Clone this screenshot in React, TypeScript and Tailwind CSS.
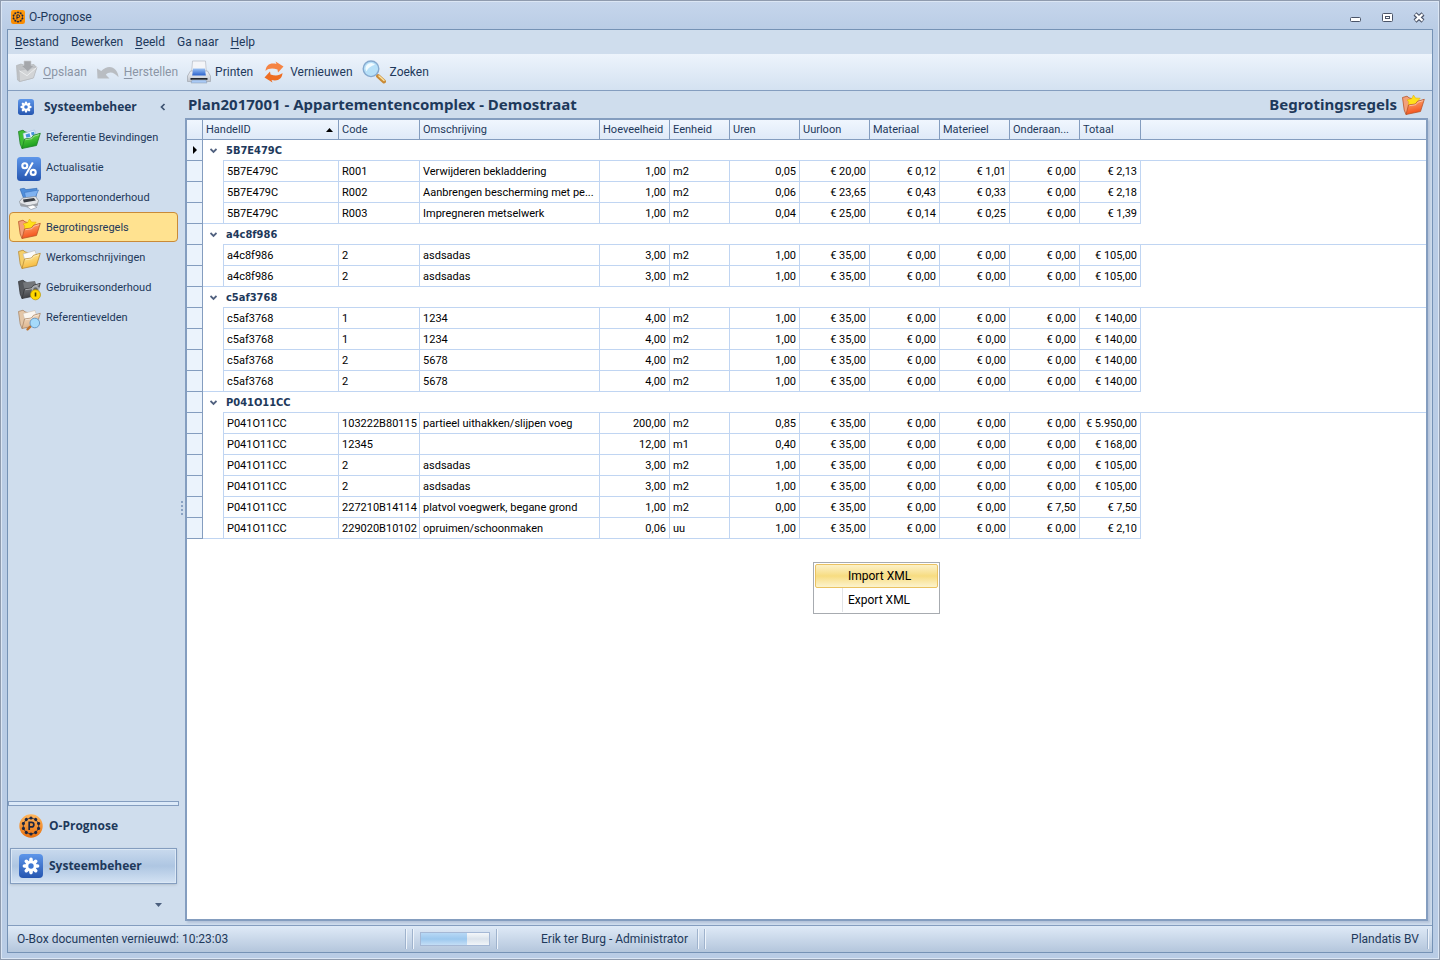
import type { ReactNode } from 'react';
import clsx from 'clsx';

interface Line {
  handelId: string;
  code: string;
  omschrijving: string;
  hoeveelheid: string;
  eenheid: string;
  uren: string;
  bedragen: string[]; // uurloon, materiaal, materieel, onderaanneming, totaal
}

const line = (
  handelId: string,
  code: string,
  omschrijving: string,
  hoeveelheid: string,
  eenheid: string,
  uren: string,
  ...bedragen: string[]
): Line => ({ handelId, code, omschrijving, hoeveelheid, eenheid, uren, bedragen });

const groups: { id: string; lines: Line[] }[] = [
  {
    id: '5B7E479C',
    lines: [
      line('5B7E479C', 'R001', 'Verwijderen bekladdering', '1,00', 'm2', '0,05', '20,00', '0,12', '1,01', '0,00', '2,13'),
      line('5B7E479C', 'R002', 'Aanbrengen bescherming met pe...', '1,00', 'm2', '0,06', '23,65', '0,43', '0,33', '0,00', '2,18'),
      line('5B7E479C', 'R003', 'Impregneren metselwerk', '1,00', 'm2', '0,04', '25,00', '0,14', '0,25', '0,00', '1,39'),
    ],
  },
  {
    id: 'a4c8f986',
    lines: [
      line('a4c8f986', '2', 'asdsadas', '3,00', 'm2', '1,00', '35,00', '0,00', '0,00', '0,00', '105,00'),
      line('a4c8f986', '2', 'asdsadas', '3,00', 'm2', '1,00', '35,00', '0,00', '0,00', '0,00', '105,00'),
    ],
  },
  {
    id: 'c5af3768',
    lines: [
      line('c5af3768', '1', '1234', '4,00', 'm2', '1,00', '35,00', '0,00', '0,00', '0,00', '140,00'),
      line('c5af3768', '1', '1234', '4,00', 'm2', '1,00', '35,00', '0,00', '0,00', '0,00', '140,00'),
      line('c5af3768', '2', '5678', '4,00', 'm2', '1,00', '35,00', '0,00', '0,00', '0,00', '140,00'),
      line('c5af3768', '2', '5678', '4,00', 'm2', '1,00', '35,00', '0,00', '0,00', '0,00', '140,00'),
    ],
  },
  {
    id: 'P041O11CC',
    lines: [
      line('P041O11CC', '103222B80115', 'partieel uithakken/slijpen voeg', '200,00', 'm2', '0,85', '35,00', '0,00', '0,00', '0,00', '5.950,00'),
      line('P041O11CC', '12345', '', '12,00', 'm1', '0,40', '35,00', '0,00', '0,00', '0,00', '168,00'),
      line('P041O11CC', '2', 'asdsadas', '3,00', 'm2', '1,00', '35,00', '0,00', '0,00', '0,00', '105,00'),
      line('P041O11CC', '2', 'asdsadas', '3,00', 'm2', '1,00', '35,00', '0,00', '0,00', '0,00', '105,00'),
      line('P041O11CC', '227210B14114', 'platvol voegwerk, begane grond', '1,00', 'm2', '0,00', '35,00', '0,00', '0,00', '7,50', '7,50'),
      line('P041O11CC', '229020B10102', 'opruimen/schoonmaken', '0,06', 'uu', '1,00', '35,00', '0,00', '0,00', '0,00', '2,10'),
    ],
  },
];

const columns = ['Code', 'Omschrijving', 'Hoeveelheid', 'Eenheid', 'Uren', 'Uurloon', 'Materiaal', 'Materieel', 'Onderaan...', 'Totaal'];

/* ---------- icons ---------- */

interface FolderProps {
  id: string;
  from: string;
  to: string;
  edge: string;
  back: string;
  behind?: ReactNode;
  children?: ReactNode;
}

function Folder({ id, from, to, edge, back, behind, children }: FolderProps) {
  return (
    <svg width="24" height="24" viewBox="0 0 24 24" aria-hidden="true">
      <defs>
        <linearGradient id={id} x1="0" y1="0" x2="0.3" y2="1">
          <stop offset="0" stopColor={from} />
          <stop offset="1" stopColor={to} />
        </linearGradient>
      </defs>
      <path d="M1.5 4.5 6 3.2l2 1.6 3 1 3 4-8.500 11.500-.5.2L3.200 17z" fill={back} stroke={edge} strokeWidth="0.8" strokeLinejoin="round" />
      {behind}
      <path d="M5 21.500 7.500 12l7-1 2-2.700 6.800-2-3.800 12.200z" fill={`url(#${id})`} stroke={edge} strokeWidth="0.8" strokeLinejoin="round" />
      <path d="M8.300 12.700l6.600-1 2-2.500 5.300-1.600" fill="none" stroke="#fff" strokeOpacity="0.6" strokeWidth="0.8" />
      {children}
    </svg>
  );
}

function OrangeFolder({ id }: { id: string }) {
  return (
    <Folder
      id={id}
      from="#ffb27a"
      to="#f4501a"
      edge="#b8562a"
      back="#f3a07a"
      behind={<path d="M12.500 2l2 3 4.700.2-2.600 3.300 1 2.700-6 1.300-4.300-.4.500-3.200L6 7l4.700-1.400z" fill="#ffe11a" stroke="#e0a800" strokeWidth="0.5" />}
    />
  );
}

function Gear({ id, size }: { id: string; size: 16 | 24 }) {
  return (
    <svg width={size} height={size} viewBox="0 0 24 24" aria-hidden="true">
      <defs>
        <linearGradient id={id} x1="0" y1="0" x2="0" y2="1">
          <stop offset="0" stopColor="#5d96ea" />
          <stop offset="1" stopColor="#2656b0" />
        </linearGradient>
      </defs>
      <rect width="24" height="24" rx="4" fill={`url(#${id})`} />
      <g stroke="#fff" strokeWidth="3.6" strokeLinecap="round">
        <path d="M12 5.4v13.2M5.4 12h13.2M7.3 7.3l9.4 9.4M16.7 7.3l-9.4 9.4" />
      </g>
      <circle cx="12" cy="12" r="5.6" fill="#fff" />
      <circle cx="12" cy="12" r="2.7" fill="#3f78d2" />
    </svg>
  );
}

const dots = [0, 36, 72, 108, 144, 180, 216, 252, 288, 324];

function AppBadge({ id, square }: { id: string; square?: boolean }) {
  return (
    <svg width={square ? 14 : 24} height={square ? 14 : 24} viewBox="0 0 24 24" aria-hidden="true">
      <defs>
        <linearGradient id={id} x1="0" y1="0" x2="0" y2="1">
          <stop offset="0" stopColor={square ? '#ff9c10' : '#ffb75e'} />
          <stop offset="1" stopColor={square ? '#f98a00' : '#e8700e'} />
        </linearGradient>
      </defs>
      {square ? <rect width="24" height="24" rx="4" fill={`url(#${id})`} /> : <circle cx="12" cy="12" r="11.7" fill={`url(#${id})`} />}
      <circle cx="12" cy="12" r="7.8" fill="none" stroke="#2a2f45" strokeWidth="0.8" />
      {dots.map((a) => (
        <circle key={a} cx="12" cy="4" r="1.6" fill="#1f2640" transform={`rotate(${a} 12 12)`} />
      ))}
      <path d="M10.2 16V8.4h2.4a2.2 2.2 0 0 1 0 4.5h-2.4" fill="none" stroke="#1f2640" strokeWidth="1.7" />
    </svg>
  );
}

function Percent() {
  return (
    <svg width="24" height="24" viewBox="0 0 24 24" aria-hidden="true">
      <defs>
        <linearGradient id="pct" x1="0" y1="0" x2="0" y2="1">
          <stop offset="0" stopColor="#5d96ea" />
          <stop offset="1" stopColor="#2656b0" />
        </linearGradient>
      </defs>
      <rect width="24" height="24" rx="3.5" fill="url(#pct)" />
      <g fill="none" stroke="#fff">
        <circle cx="7.8" cy="8.8" r="2.5" strokeWidth="2.1" />
        <circle cx="16.2" cy="15.4" r="2.5" strokeWidth="2.1" />
        <path d="M15.800 5.500 8.200 18.700" strokeWidth="2" />
      </g>
    </svg>
  );
}

function ReportPrinter() {
  return (
    <svg width="24" height="24" viewBox="0 0 24 24" aria-hidden="true">
      <path d="M3 2l4-.7 2 1.300 11-1.300-1 9-12 2z" fill="#4f8edb" stroke="#2c63ad" strokeWidth="0.6" />
      <path d="M7.500 5.500l14-2.500-3.500 8-9 1.500z" fill="#7fb2f0" stroke="#3c74bf" strokeWidth="0.6" />
      <path d="M2.500 14.500l3-3.500 13-1.500 3 4-1.500 4.500-16 1z" fill="#e4e6e9" stroke="#84888e" strokeWidth="0.7" />
      <path d="M6 12.500l11-1.500 1.800 2.500-12 2z" fill="#3a3e44" />
      <path d="M3.500 16l8 2.400 9.500-2.400v2.500l-8 2.500-9-2z" fill="#9da1a7" />
      <path d="M10 19.500l6-1.500 4 2.300-6 2.300z" fill="#fff" stroke="#8a8f96" strokeWidth="0.6" />
    </svg>
  );
}

function SaveIcon() {
  return (
    <svg width="24" height="24" viewBox="0 0 24 24" aria-hidden="true">
      <path d="M1.500 5.500L6 4l4 1.500 9-1 2.500 3L18 18 4.500 21.500 2.500 20z" fill="#bfc2c5" stroke="#b1b4b8" strokeWidth="0.7" strokeLinejoin="round" />
      <path d="M4 10.500L22 7l-3.500 11L4.500 21.500z" fill="#d2d4d6" stroke="#b6b9bd" strokeWidth="0.7" strokeLinejoin="round" />
      <path d="M4.300 10.700l7.700 5 9.600-8.200" fill="none" stroke="#eceeef" strokeWidth="1" />
      <path d="M9 1h7v4.500h3.200L12.800 11.500 6 5.500h3z" fill="#a4a7ab" stroke="#c9ccd0" strokeWidth="0.6" />
    </svg>
  );
}

function UndoIcon() {
  return (
    <svg width="24" height="24" viewBox="0 0 24 24" aria-hidden="true">
      <path d="M1 8.500L1.500 18.500 13.500 18.500l-3.700-3.700c3-3.500 8-3.500 12.700 2.500C22 8.500 13.500 3 5.200 11z" fill="#b9bdc2" />
    </svg>
  );
}

function PrintIcon() {
  return (
    <svg width="24" height="24" viewBox="0 0 24 24" aria-hidden="true">
      <defs>
        <linearGradient id="ink" x1="0" y1="0" x2="0" y2="1">
          <stop offset="0" stopColor="#9cc2f4" />
          <stop offset="1" stopColor="#2b62cc" />
        </linearGradient>
        <linearGradient id="case" x1="0" y1="0" x2="0" y2="1">
          <stop offset="0" stopColor="#f4f5f8" />
          <stop offset="1" stopColor="#bfc4cc" />
        </linearGradient>
      </defs>
      <path d="M5.500 1h13l.8 10.500H4.700z" fill="#f4f5f8" stroke="#b4bac4" strokeWidth="0.7" />
      <path d="M3.500 11h17l3 5v5.500H.5V16z" fill="url(#case)" stroke="#a0a6af" strokeWidth="0.7" />
      <path d="M6 8.500h12l.8 7H5.200z" fill="url(#ink)" />
      <path d="M3.500 18h17v1.800h-17z" fill="#23272e" />
      <path d="M5 20h14l1 3H4z" fill="#a9c9f5" stroke="#8b98aa" strokeWidth="0.5" />
    </svg>
  );
}

function RefreshIcon() {
  return (
    <svg width="24" height="24" viewBox="0 0 24 24" aria-hidden="true">
      <path d="M3.500 11C4 5 8 2.500 14.500 4L13.500 1.500l8 5-5.500 6-.5-3C10.500 8 6.500 8.300 3.500 11z" fill="#f58444" />
      <path d="M20.500 13c-.5 6-4.500 8.500-11 7l1 2.500-8-5 5.500-6 .5 3c5 1.500 9 1.200 12-1.500z" fill="#ee6d22" />
    </svg>
  );
}

function SearchIcon() {
  return (
    <svg width="24" height="24" viewBox="0 0 24 24" aria-hidden="true">
      <path d="M16 16l6 5.500" stroke="#c98a35" strokeWidth="4" strokeLinecap="round" />
      <path d="M17 16l5 4.500" stroke="#fbe3a0" strokeWidth="1.500" strokeLinecap="round" />
      <circle cx="9" cy="8.800" r="7.800" fill="#b7e0f8" stroke="#86a9ce" strokeWidth="1.400" />
      <path d="M3.500 9a5.600 5.600 0 0 1 9.500-4.300C9 5.500 6 8 4.500 11.500z" fill="#f1fbff" />
    </svg>
  );
}

function Chevron() {
  return (
    <svg width="7" height="6" viewBox="0 0 7 6" className="mx-auto" aria-hidden="true">
      <path d="M0.5 1l3 3 3-3" fill="none" stroke="#51617f" strokeWidth="1.8" />
    </svg>
  );
}

/* ---------- window parts ---------- */

const menuItems: [string, string][] = [
  ['B', 'estand'],
  ['', 'Bewerken'],
  ['B', 'eeld'],
  ['', 'Ga naar'],
  ['H', 'elp'],
];

function TitleBar() {
  return (
    <header className="flex h-7 items-center justify-between pt-1 pr-2 pl-1">
      <div className="flex items-center gap-1">
        <AppBadge id="badge-title" square />
        <span className="text-xs">O-Prognose</span>
      </div>
      <div className="flex items-center gap-5">
        <button aria-label="Minimaliseren" className="h-3 w-3">
          <svg width="12" height="12" viewBox="0 0 12 12"><rect x="1.500" y="6.500" width="10" height="4" rx="1" fill="#fff" stroke="#4b5468" /></svg>
        </button>
        <button aria-label="Maximaliseren" className="h-3 w-3">
          <svg width="12" height="12" viewBox="0 0 12 12">
            <rect x="1.500" y="2.500" width="10" height="8" rx="1" fill="#fff" stroke="#4b5468" />
            <rect x="4.500" y="5.500" width="4" height="2" fill="#fff" stroke="#4b5468" />
          </svg>
        </button>
        <button aria-label="Sluiten" className="h-3 w-3">
          <svg width="12" height="12" viewBox="0 0 12 12">
            <path d="M2 3l8 7M10 3l-8 7" stroke="#4b5468" strokeWidth="4.400" />
            <path d="M2.500 3.200l7 6.400M9.500 3.200l-7 6.400" stroke="#fff" strokeWidth="2.200" />
          </svg>
        </button>
      </div>
    </header>
  );
}

function ToolButton({ icon, children, disabled }: { icon: ReactNode; children: ReactNode; disabled?: boolean }) {
  return (
    <button disabled={disabled} className="flex items-center gap-1 text-xs disabled:text-[#8b95a5]">
      {icon}
      {children}
    </button>
  );
}

const navItems: { label: string; icon: ReactNode; active?: boolean }[] = [
  {
    label: 'Referentie Bevindingen',
    icon: (
      <Folder id="f-green" from="#6fe04a" to="#169a1c" edge="#1c7f22" back="#3fbf35"
        behind={<><path d="M6 6.500l11.500-3.500 2 7-12 4z" fill="#e9f4ff" stroke="#8fb3d8" strokeWidth="0.5" /><path d="M8.500 7.500l4-1.200 1 3.500-4 1zM14 5.500l3-.8.8 3-3 .8z" fill="#4793dc" /></>} />
    ),
  },
  { label: 'Actualisatie', icon: <Percent /> },
  { label: 'Rapportenonderhoud', icon: <ReportPrinter /> },
  { label: 'Begrotingsregels', icon: <OrangeFolder id="f-orange" />, active: true },
  {
    label: 'Werkomschrijvingen',
    icon: (
      <Folder id="f-yellow" from="#fff0a8" to="#f6b93c" edge="#b98a32" back="#f5cf6a"
        behind={<path d="M6 7l12-3.500 2 6-12 4z" fill="#fafafa" stroke="#b9b9b9" strokeWidth="0.6" />} />
    ),
  },
  {
    label: 'Gebruikersonderhoud',
    icon: (
      <Folder id="f-black" from="#8b8e92" to="#3c3e42" edge="#333538" back="#55585c"
        behind={<path d="M6 5.500l12-1.500 2 6-12 4z" fill="#74777b" />}>
        <path d="M15.500 15v-2.500a3 3 0 0 1 6 0V15" fill="none" stroke="#a9adb2" strokeWidth="1.5" />
        <circle cx="18.500" cy="17.800" r="5" fill="#ffd800" stroke="#b89300" strokeWidth="0.7" />
        <path d="M18.500 15.500v4" stroke="#4a3c00" strokeWidth="1.6" />
      </Folder>
    ),
  },
  {
    label: 'Referentievelden',
    icon: (
      <Folder id="f-sand" from="#f7e2cc" to="#dcb48c" edge="#a98767" back="#e4c7a8"
        behind={<path d="M6 6.500l12-3 2 6-12 4z" fill="#fbf6f0" stroke="#c9b7a4" strokeWidth="0.5" />}>
        <path d="M14.500 18.500l-4 3.800" stroke="#c0722c" strokeWidth="2.4" strokeLinecap="round" />
        <circle cx="17.800" cy="16" r="4.800" fill="#a5dafa" stroke="#6d9cc7" strokeWidth="1" />
      </Folder>
    ),
  },
];

function Sidebar() {
  return (
    <aside className="flex w-[171px] shrink-0 flex-col">
      <div className="flex h-[31px] items-center pr-[13px] pl-[10px]">
        <Gear id="gear-head" size={16} />
        <h2 className="ml-[10px] flex-1 font-['Open_Sans','Noto_Sans',sans-serif] text-xs font-bold text-[#1e395b]">Systeembeheer</h2>
        <button aria-label="Inklappen">
          <svg width="7" height="8" viewBox="0 0 7 8"><path d="M5.5 1l-3 3 3 3" fill="none" stroke="#3d5271" strokeWidth="1.7" /></svg>
        </button>
      </div>
      <nav className="flex-1 px-px">
        {navItems.map(({ label, icon, active }) => (
          <a
            key={label}
            href="#"
            className={clsx(
              'flex h-[30px] items-center gap-[5px] rounded-sm border pl-[7px] text-[11px] leading-4',
              active ? 'border-[#c98a38] bg-[#ffe290]' : 'border-transparent',
            )}
          >
            <span className="pt-1">{icon}</span>
            <span className="pt-px">{label}</span>
          </a>
        ))}
      </nav>
      <div className="h-[5px] border border-[#849dbf] bg-[#dce9f8]" />
      <div className="px-[2px] font-['Open_Sans','Noto_Sans',sans-serif] text-xs font-bold text-[#1e395b]">
        <button className="flex h-10 w-full items-center gap-[6px] pl-[9px]">
          <AppBadge id="badge-nav" />
          O-Prognose
        </button>
        <button className="mt-[2px] flex h-9 w-full items-center gap-[6px] border border-[#849dbf] bg-linear-to-b from-[#c9daee] via-[#aec6e2] to-[#d3e2f3] pl-2 shadow-sm inset-ring inset-ring-[#dbe8f6]">
          <Gear id="gear-nav" size={24} />
          Systeembeheer
        </button>
      </div>
      <div className="flex h-[41px] items-center justify-end pr-[17px]">
        <button aria-label="Meer">
          <svg width="7" height="4" viewBox="0 0 7 4"><path d="M0 0h7L3.5 4z" fill="#4b5f7e" /></svg>
        </button>
      </div>
    </aside>
  );
}

const cell = 'overflow-hidden whitespace-nowrap border-r border-b border-[#c0d5f2] p-0 pt-[2px] pl-[3px]';
const numberCell = 'text-right pr-[3px]';

function IndicatorCell({ current }: { current?: boolean }) {
  return (
    <td className="border-r border-b border-[#849dbf] bg-[#ebf3fc]">
      {current && (
        <svg width="4" height="8" viewBox="0 0 4 8" className="mx-auto"><path d="M0 0l4 4-4 4z" fill="#000" /></svg>
      )}
    </td>
  );
}

function Grid() {
  return (
    <table className="w-full table-fixed border-separate border-spacing-0 text-[11px] leading-4 text-black">
      <colgroup>
        <col className="w-4" />
        <col className="w-5" />
        <col className="w-[116px]" />
        <col className="w-[81px]" />
        <col className="w-[180px]" />
        <col className="w-[70px]" />
        <col className="w-[60px]" />
        <col className="w-[70px]" />
        <col className="w-[70px]" />
        <col className="w-[70px]" />
        <col className="w-[70px]" />
        <col className="w-[70px]" />
        <col className="w-[61px]" />
        <col />
      </colgroup>
      <thead>
        <tr className="h-5 text-left text-[#1e395b] *:border-b *:border-[#849dbf] *:bg-linear-to-b *:from-[#f0f6fe] *:to-[#dfeaf8] *:p-0 *:font-normal">
          <td className="border-r" />
          <th colSpan={2} className="border-r">
            <div className="flex items-center justify-between pt-px pr-[5px] pl-[3px]">
              HandelID
              <svg width="7" height="4" viewBox="0 0 7 4"><path d="M0 4h7L3.5 0z" fill="#000" /></svg>
            </div>
          </th>
          {columns.map((name) => (
            <th key={name} className="border-r">
              <div className="pt-px pl-[3px] whitespace-nowrap">{name}</div>
            </th>
          ))}
          <td />
        </tr>
      </thead>
      {groups.map((group, g) => (
        <tbody key={group.id}>
          <tr className="h-[21px]">
            <IndicatorCell current={g === 0} />
            <td>
              <button aria-label={`Groep ${group.id}`} className="block w-full">
                <Chevron />
              </button>
            </td>
            <th colSpan={12} className="border-b border-[#c0d5f2] p-0 pt-[2px] pl-[3px] text-left font-['DejaVu_Sans_Condensed',sans-serif] font-bold text-[#1e395b]">
              {group.id}
            </th>
          </tr>
          {group.lines.map((row, i) => (
            <tr key={i} className="h-[21px]">
              <IndicatorCell />
              <td className={clsx('border-[#c0d5f2]', i === group.lines.length - 1 && 'border-b')} />
              <td className={clsx(cell, 'border-l')}>{row.handelId}</td>
              <td className={cell}>{row.code}</td>
              <td className={cell}>{row.omschrijving}</td>
              <td className={clsx(cell, numberCell)}>{row.hoeveelheid}</td>
              <td className={cell}>{row.eenheid}</td>
              <td className={clsx(cell, numberCell)}>{row.uren}</td>
              {row.bedragen.map((bedrag, b) => (
                <td key={b} className={clsx(cell, numberCell)}>€ {bedrag}</td>
              ))}
              <td />
            </tr>
          ))}
        </tbody>
      ))}
    </table>
  );
}

function ContextMenu() {
  return (
    <div role="menu" className="absolute top-[442px] left-[626px] w-[127px] border border-[#a7abb0] bg-white p-px text-xs text-black">
      <button role="menuitem" className="block h-6 w-full rounded-xs border border-[#eac261] bg-linear-to-b from-[#fcf1c8] via-[#f7dc80] to-[#fcf3cd] pl-8 text-left">
        Import XML
      </button>
      <div className="flex h-6">
        <span className="w-7 border-r border-[#e2e4e7]" />
        <button role="menuitem" className="flex-1 pl-[5px] text-left">
          Export XML
        </button>
      </div>
    </div>
  );
}

function Separator() {
  return <span className="h-5 w-[2px] border-l border-[#9fb3cd] bg-[#eef4fb]" />;
}

function StatusBar() {
  return (
    <footer className="flex h-[27px] items-center border-t border-[#849dbf] bg-linear-to-b from-[#dfeaf7] to-[#b4c6dc] text-xs">
      <span className="w-[397px] pl-[9px]">O-Box documenten vernieuwd: 10:23:03</span>
      <div className="flex items-center gap-[5px]">
        <Separator />
        <Separator />
      </div>
      <div role="progressbar" aria-label="Voortgang" aria-valuenow={66} className="mx-[6px] h-[14px] w-[70px] border border-[#a5b8d5] bg-linear-to-b from-[#f4f7fa] via-[#dbe3ec] to-[#f1f5f9]">
        <div className="h-full bg-linear-to-b from-[#b7d8f5] via-[#9cc8ee] to-[#c4def6]" style={{ width: '67%' }} />
      </div>
      <Separator />
      <span className="ml-[43px] w-[156px]">Erik ter Burg - Administrator</span>
      <div className="flex items-center gap-[5px]">
        <Separator />
        <Separator />
      </div>
      <span className="flex-1 pr-2 text-right">Plandatis BV</span>
      <Separator />
      <span className="w-[3px]" />
    </footer>
  );
}

export default function App() {
  return (
    <div className="flex min-h-screen flex-col border border-[#8f9bae] bg-[#bccfe7] bg-linear-to-b from-[#c6d6ec] to-[#b9cce5] to-[30px] px-[6px] pb-[6px] font-['Roboto',sans-serif] text-[#1e395b] inset-ring inset-ring-[#dbe6f4]">
      <TitleBar />
      <div className="flex flex-1 flex-col border border-[#7592b5] bg-[#cfdded]">
        <nav className="flex h-6 items-center gap-3 pl-[7px] text-xs">
          {menuItems.map(([key, rest]) => (
            <button key={key + rest}>
              {key && <u className="underline-offset-2">{key}</u>}
              {rest}
            </button>
          ))}
        </nav>
        <div className="flex h-[37px] items-center gap-[9px] border-b border-[#849dbf] bg-linear-to-b from-[#edf4fc] to-[#d4e2f1] pl-[7px]">
          <ToolButton disabled icon={<SaveIcon />}><span><u className="underline-offset-2">O</u>pslaan</span></ToolButton>
          <ToolButton disabled icon={<UndoIcon />}><span><u className="underline-offset-2">H</u>erstellen</span></ToolButton>
          <ToolButton icon={<PrintIcon />}>Printen</ToolButton>
          <ToolButton icon={<RefreshIcon />}>Vernieuwen</ToolButton>
          <ToolButton icon={<SearchIcon />}>Zoeken</ToolButton>
        </div>
        <div className="flex flex-1">
          <Sidebar />
          <div className="flex w-[6px] shrink-0 flex-col items-center justify-center gap-[2px]">
            {[0, 1, 2, 3].map((n) => (
              <span key={n} className="h-[2px] w-[2px] bg-[#8ba3c4]" />
            ))}
          </div>
          <main className="flex min-w-0 flex-1 flex-col pr-1 pb-1">
            <div className="flex h-[27px] items-center justify-between pr-[3px] pl-[3px] font-['Noto_Sans',sans-serif] text-[15px] font-bold text-[#1e395b]">
              <h1>Plan2017001 - Appartementencomplex - Demostraat</h1>
              <div className="flex items-center gap-1">
                <h2>Begrotingsregels</h2>
                <OrangeFolder id="f-title" />
              </div>
            </div>
            <section className="relative flex-1 border-2 border-[#849dbf] bg-white shadow-[2px_2px_2px_#b4c4da]">
              <Grid />
              <ContextMenu />
            </section>
          </main>
        </div>
        <StatusBar />
      </div>
    </div>
  );
}
